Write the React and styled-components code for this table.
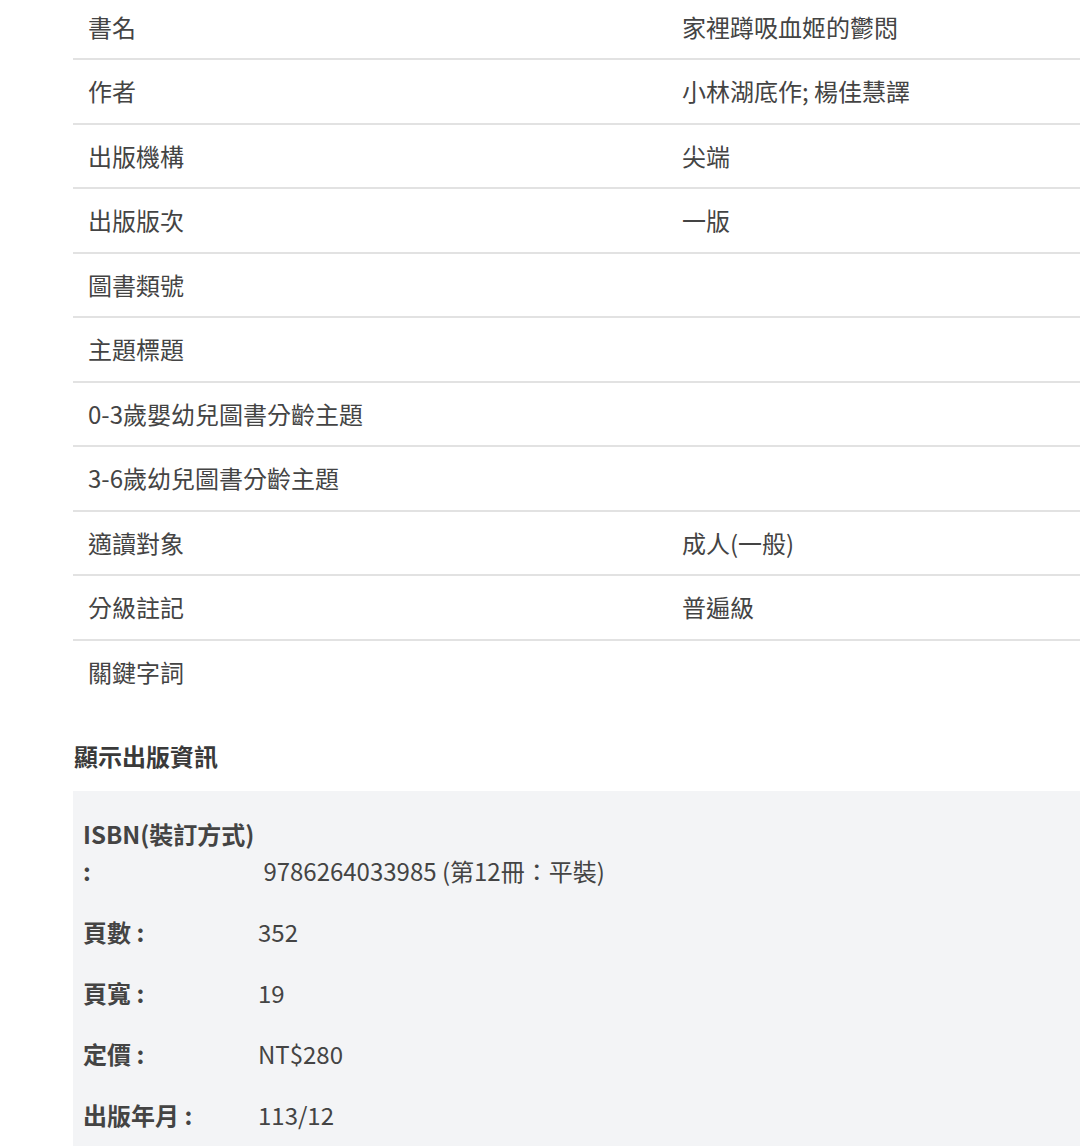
import styled, { createGlobalStyle } from "styled-components";

const GlobalStyle = createGlobalStyle`
    html, body {
        margin: 0;
        padding: 0;
        background: #ffffff;
    }

    body {
        font-family: "Noto Sans CJK TC", "Noto Sans", sans-serif;
        color: #444444;
    }
`;

const details = [
    { label: "書名", value: "家裡蹲吸血姬的鬱悶" },
    { label: "作者", value: "小林湖底作; 楊佳慧譯" },
    { label: "出版機構", value: "尖端" },
    { label: "出版版次", value: "一版" },
    { label: "圖書類號", value: "" },
    { label: "主題標題", value: "" },
    { label: "0-3歲嬰幼兒圖書分齡主題", value: "" },
    { label: "3-6歲幼兒圖書分齡主題", value: "" },
    { label: "適讀對象", value: "成人(一般)" },
    { label: "分級註記", value: "普遍級" },
    { label: "關鍵字詞", value: "" },
];

const publishInfo = [
    { label: "ISBN(裝訂方式)", value: "\u00a09786264033985 (第12冊：平裝)" },
    { label: "頁數", value: "352" },
    { label: "頁寬", value: "19" },
    { label: "定價", value: "NT$280" },
    { label: "出版年月", value: "113/12" },
];

export default function App () {

    return (
        <>
            <GlobalStyle />
            <Page>
                <DetailTable>
                    {details.map(({ label, value }) => (
                        <DetailRow key={label}>
                            <DetailCell>{label}</DetailCell>
                            <DetailCell>{value}</DetailCell>
                        </DetailRow>
                    ))}
                </DetailTable>

                <SectionTitle>顯示出版資訊</SectionTitle>

                <InfoBox>
                    {publishInfo.map(({ label, value }) => (
                        <InfoRow key={label}>
                            <InfoLabel><LabelName>{label}</LabelName> :</InfoLabel>
                            <InfoValue>{value}</InfoValue>
                        </InfoRow>
                    ))}
                </InfoBox>
            </Page>
        </>
    );
}

const Page = styled.div`

    display: flex;
    flex-direction: column;
    padding-left: 73px;
    margin-top: -4.5px;

`;

const DetailTable = styled.div`

    display: flex;
    flex-direction: column;

`;

const DetailRow = styled.div`

    display: grid;
    grid-template-columns: 594px 1fr;
    border-bottom: 2px solid #e2e2e2;

    &:last-child {
        border-bottom: none;
    }

`;

const DetailCell = styled.div`

    padding: 13.25px 15px;
    font-size: 24px;
    line-height: 36px;
    min-height: 36px;
    color: #444444;

`;

const SectionTitle = styled.h3`

    margin: 35px 0 17px 1px;
    font-size: 24px;
    line-height: 36px;
    font-weight: 700;
    color: #3a3a3a;

`;

const InfoBox = styled.div`

    display: flex;
    flex-direction: column;
    gap: 24px;
    padding: 24px 10px 30px;
    background: #f3f4f6;

`;

const InfoRow = styled.div`

    display: grid;
    grid-template-columns: 168px 1fr;
    column-gap: 7px;
    align-items: end;
    font-size: 24px;
    line-height: 37px;

`;

const InfoLabel = styled.div`

    font-weight: 700;
    color: #444444;

`;

const LabelName = styled.span`

    white-space: nowrap;

`;

const InfoValue = styled.div`

    color: #444444;

`;
